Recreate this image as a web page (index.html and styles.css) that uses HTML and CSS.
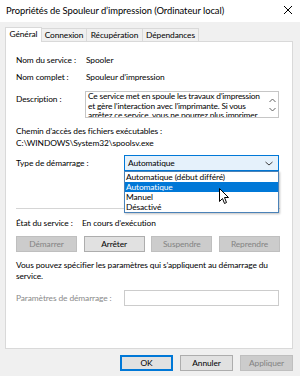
FILE: index.html
```html
<!DOCTYPE html>
<html lang="fr">
<head>
<meta charset="utf-8">
<link rel="stylesheet" href="styles.css">
</head>
<body>
<div class="window">
  <div class="titlebar">
    <span class="title">Propriétés de Spouleur d’impression (Ordinateur local)</span>
    <svg class="close" width="10" height="10" viewBox="0 0 10 10"><path d="M1 1 L9 9 M9 1 L1 9" stroke="#000" stroke-width="1"/></svg>
  </div>
  <div class="body">
    <div class="tabs">
      <div class="tab active t1">Général</div>
      <div class="tab t2">Connexion</div>
      <div class="tab t3">Récupération</div>
      <div class="tab t4">Dépendances</div>
    </div>
    <div class="panel">
      <div class="row r1"><span class="lbl">Nom du service :</span><span>Spooler</span></div>
      <div class="row r2"><span class="lbl">Nom complet :</span><span>Spouleur d’impression</span></div>
      <div class="row r3">
        <span class="lbl">Description :</span>
        <div class="desc">
          <div class="desc-text">Ce service met en spoule les travaux d’impression et gère l’interaction avec l’imprimante. Si vous arrêtez ce service, vous ne pourrez plus imprimer ni afficher vos imprimantes.</div>
          <div class="scroll">
            <svg width="7" height="5" viewBox="0 0 7 5"><path d="M0.5 4 L3.5 1 L6.5 4" fill="none" stroke="#606060" stroke-width="1"/></svg>
            <svg width="7" height="5" viewBox="0 0 7 5"><path d="M0.5 1 L3.5 4 L6.5 1" fill="none" stroke="#606060" stroke-width="1"/></svg>
          </div>
        </div>
      </div>
      <div class="path-lbl">Chemin d’accès des fichiers exécutables :</div>
      <div class="path">C:\WINDOWS\System32\spoolsv.exe</div>
      <div class="row r4">
        <span class="lbl2">Type de démarrage :</span>
        <div class="combo-wrap">
          <div class="combo">
            <span>Automatique</span>
            <svg width="8" height="5" viewBox="0 0 8 5"><path d="M0.5 1 L4 4 L7.5 1" fill="none" stroke="#404040" stroke-width="1"/></svg>
          </div>
          <ul class="list">
            <li>Automatique (début différé)</li>
            <li class="sel">Automatique</li>
            <li>Manuel</li>
            <li>Désactivé</li>
          </ul>
          <svg class="cursor" width="11" height="17" viewBox="0 0 11 17"><path d="M0.5 0.5 L0.5 13.5 L3.5 10.5 L5.5 15.5 L7.5 14.5 L5.5 9.5 L9.5 9.5 Z" fill="#fff" stroke="#000" stroke-width="1" stroke-linejoin="round"/></svg>
        </div>
      </div>
      <div class="sep"></div>
      <div class="row r5"><span class="lbl">État du service :</span><span>En cours d’exécution</span></div>
      <div class="btns">
        <button class="btn" disabled>Démarrer</button>
        <button class="btn">Arrêter</button>
        <button class="btn" disabled>Suspendre</button>
        <button class="btn" disabled>Reprendre</button>
      </div>
      <p class="note">Vous pouvez spécifier les paramètres qui s’appliquent au démarrage du service.</p>
      <div class="row r6">
        <span class="lbl2 dis">Paramètres de démarrage :</span>
        <div class="input"></div>
      </div>
    </div>
    <div class="footer">
      <button class="btn fbtn ok">OK</button>
      <button class="btn fbtn">Annuler</button>
      <button class="btn fbtn" disabled>Appliquer</button>
    </div>
  </div>
</div>
</body>
</html>
```

FILE: styles.css
```css
* { box-sizing: border-box; }
html, body { margin: 0; padding: 0; }
body {
  width: 300px;
  height: 376px;
  overflow: hidden;
  font-family: Lato, "Noto Sans", sans-serif;
  font-size: 8.4px;
  letter-spacing: -0.1px;
  color: #000;
  background: #f0f0f0;
}
.window { width: 300px; height: 376px; display: flex; flex-direction: column; }
.titlebar {
  height: 22px;
  background: #fff;
  display: flex;
  align-items: center;
  justify-content: space-between;
  padding: 0 7px 2px 6px;
}
.title { font-size: 9.4px; letter-spacing: -0.05px; }
.body { flex: 1; padding: 4px 7px 0 5px; }
.tabs { display: flex; height: 15px; align-items: flex-end; }
.tab {
  height: 13px;
  border: 1px solid #d9d9d9;
  border-bottom: none;
  border-left: none;
  background: #f0f0f0;
  line-height: 12px;
  white-space: nowrap;
  text-align: center;
}
.t1 { width: 37px; }
.t2 { width: 45px; }
.t3 { width: 56px; }
.t4 { width: 56px; }
.tab.active {
  height: 15px;
  background: #fff;
  border-left: 1px solid #d9d9d9;
  position: relative;
  top: 1px;
  line-height: 13px;
}
.panel {
  height: 308px;
  background: #fff;
  border: 1px solid #d9d9d9;
  padding: 12px 13px 0 10px;
}
.row { display: flex; align-items: center; height: 12px; line-height: 12px; white-space: nowrap; }
.lbl { width: 70px; flex: none; }
.lbl2 { width: 108px; flex: none; }
.dis { color: #8a8a8a; }
.r2 { margin-top: 5px; }
.r3 { margin-top: 8px; height: 27px; align-items: flex-start; }
.r3 .lbl { width: 69px; padding-top: 2px; }
.desc {
  width: 194px;
  height: 27px;
  border: 1px solid #c6c6c6;
  display: flex;
  overflow: hidden;
  white-space: normal;
}
.desc-text { flex: 1; padding: 0 1px 0 2px; line-height: 9.5px; letter-spacing: -0.2px; }
.scroll {
  width: 12px;
  flex: none;
  display: flex;
  flex-direction: column;
  align-items: center;
  justify-content: space-between;
  padding: 6px 0 5px;
}
.path-lbl { margin-top: 7px; line-height: 12px; height: 12px; }
.path { line-height: 12px; height: 12px; }
.r4 { margin-top: 6px; height: 16px; }
.combo-wrap { position: relative; }
.combo {
  width: 155px;
  height: 16px;
  border: 1px solid #0078d7;
  background: #e5f1fb;
  display: flex;
  align-items: center;
  justify-content: space-between;
  padding: 0 5px 0 3px;
}
.list {
  position: absolute;
  left: 0;
  top: 16px;
  width: 155px;
  margin: 0;
  padding: 0;
  list-style: none;
  background: #fff;
  border: 1px solid #4a82b8;
  box-shadow: 1px 1px 2px rgba(0,0,0,0.25);
  z-index: 2;
}
.list li { height: 10px; line-height: 10px; padding-left: 1px; }
.list li.sel { background: #0078d7; color: #fff; }
.cursor { position: absolute; left: 95px; top: 33px; z-index: 3; }
.sep { height: 1px; background: #d5d5d5; margin: 37px 0 0 0; width: 264px; }
.r5 { margin-top: 8px; }
.r5 .lbl { width: 66px; }
.btns { display: flex; justify-content: space-between; width: 264px; margin-top: 7px; }
.btn {
  font-family: inherit;
  font-size: 8.4px;
  letter-spacing: -0.1px;
  color: #000;
  width: 61px;
  height: 16px;
  padding: 0;
  background: #e1e1e1;
  border: 1px solid #adadad;
  border-radius: 0;
}
.btn:disabled { background: #cccccc; border-color: #bfbfbf; color: #838383; }
.note { margin: 8px 0 0; line-height: 11px; width: 266px; }
.r6 { margin-top: 8px; height: 16px; }
.input { width: 155px; height: 16px; border: 1px solid #cccccc; }
.footer { display: flex; justify-content: flex-end; gap: 7px; margin-top: 6px; }
.fbtn { width: 53px; }
.ok { border: 2px solid #0078d7; }
```
